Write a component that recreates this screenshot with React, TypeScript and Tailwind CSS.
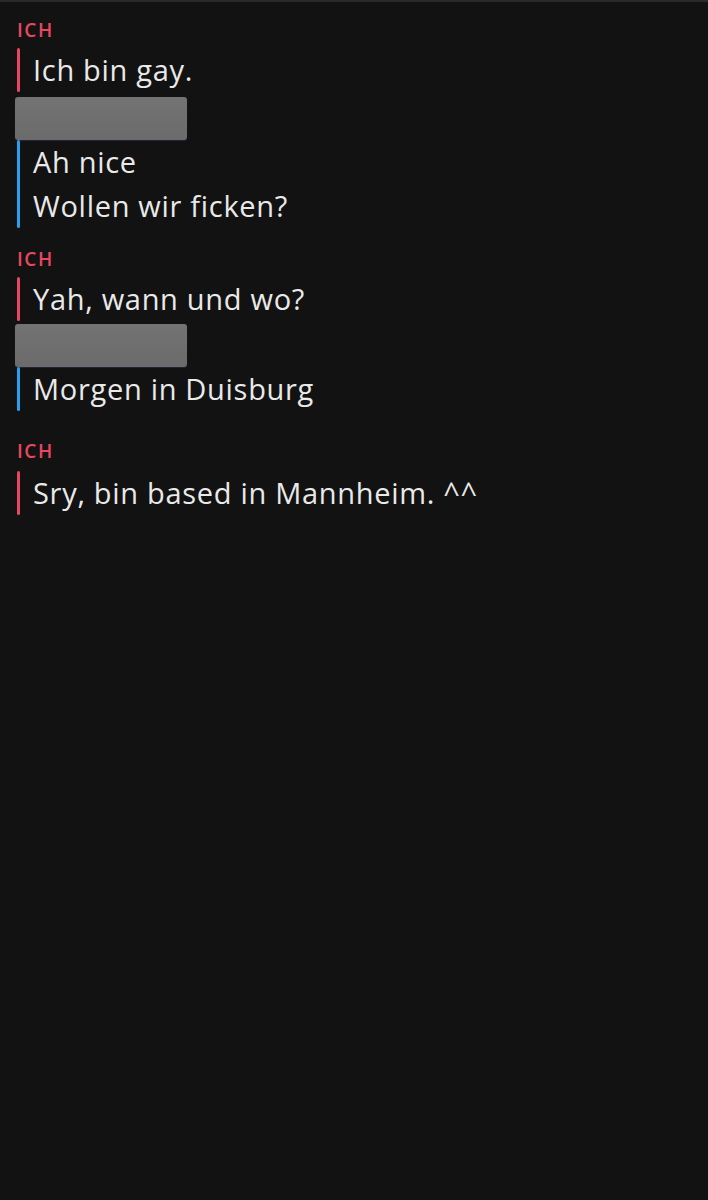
type Block = { lines: string[] };

const blocks: Block[] = [
  { lines: ['Ich bin gay.'] },
  { lines: ['Ah nice', 'Wollen wir ficken?'] },
  { lines: ['Yah, wann und wo?'] },
  { lines: ['Morgen in Duisburg'] },
  { lines: ['Sry, bin based in Mannheim. ^^'] },
];

function Label({ className }: { className?: string }) {
  return (
    <div className={`pl-[17px] text-[19px] leading-[20px] font-semibold tracking-[0.08em] text-[#e8475f] ${className ?? ''}`}>
      ICH
    </div>
  );
}

function Bubble({ color, lines }: { color: string; lines: string[] }) {
  return (
    <div className="flex pl-[17px]">
      <div className={`w-[3px] rounded-full ${color}`} />
      <div className="pl-[13px]">
        {lines.map((line) => (
          <div
            key={line}
            className="h-[44px] text-[29px] leading-[44px] tracking-[0.7px] text-[#e9e9e9] [font-variant-ligatures:none]"
          >
            {line}
          </div>
        ))}
      </div>
    </div>
  );
}

function Redacted() {
  return (
    <div className="ml-[15px] h-[43px] w-[172px] rounded-[3px] bg-gradient-to-b from-[#737374] to-[#6b6b6c] shadow-[0_1px_1px_rgba(40,40,60,0.9)]" />
  );
}

export default function App() {
  return (
    <div
      className="h-[1200px] w-[708px] border-t-2 border-[#2a2a2a] bg-[#121212]"
      style={{ fontFamily: '"Open Sans", Lato, sans-serif' }}
    >
      <div className="pt-[18px]">
        <Label />
        <div className="mt-[8px]">
          <Bubble color="bg-[#e8475f]" lines={blocks[0].lines} />
        </div>
        <div className="mt-[5px]">
          <Redacted />
        </div>
        <Bubble color="bg-[#2a9ff0]" lines={blocks[1].lines} />
        <Label className="mt-[21px]" />
        <div className="mt-[8px]">
          <Bubble color="bg-[#e8475f]" lines={blocks[2].lines} />
        </div>
        <div className="mt-[3px]">
          <Redacted />
        </div>
        <Bubble color="bg-[#2a9ff0]" lines={blocks[3].lines} />
        <Label className="mt-[30px]" />
        <div className="mt-[10px]">
          <Bubble color="bg-[#e8475f]" lines={blocks[4].lines} />
        </div>
      </div>
    </div>
  );
}
